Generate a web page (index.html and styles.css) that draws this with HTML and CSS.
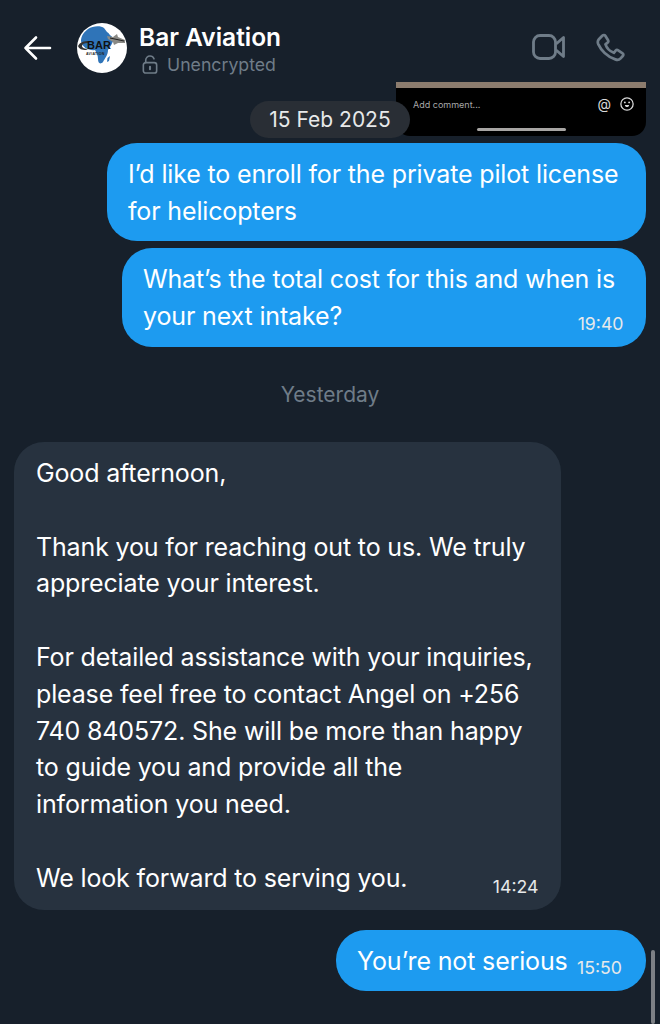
FILE: index.html
```html
<!DOCTYPE html>
<html lang="en">
<head>
    <meta charset="UTF-8">
    <meta name="viewport" content="width=device-width, initial-scale=1.0">
    <title>Bar Aviation</title>
    <link rel="stylesheet" href="styles.css">
</head>
<body>
    <header class="top-bar">
        <svg class="back" width="30" height="26" viewBox="0 0 30 26" fill="none" stroke="#fff" stroke-width="2.6" stroke-linecap="round" stroke-linejoin="round">
            <path d="M2.5 13H27M13 2.5L2.5 13L13 23.5"/>
        </svg>
        <svg class="avatar" width="50" height="50" viewBox="0 0 50 50">
            <circle cx="25" cy="25" r="25" fill="#fff"/>
            <path d="M11 6C16 2.500 24 2.500 27 5L30 9C32 10 33 13 37 15C36 20 33 24 31 27C31 32 28 35 26 39C23 42 21 40 21 36C21 32 19 29 18 27C13 28 5 25 4 18C4 13 7 9 11 6Z" fill="#2f74b8"/>
            <path d="M30.500 35L33 33L32 38L30 39Z" fill="#2f74b8"/>
            <path d="M30 13L36 14L40 11L41 14L48 17L48 20L41 20L37 22L36 19L31 16Z" fill="#8a8a86"/>
            <path d="M33 15L47 18" stroke="#222" stroke-width="1" fill="none"/>
            <path d="M1 23C3 19 7 18 12 18L11 20C7 20 5 21 5 23C5 25 8 26 11 26L9 27C5 27 2 26 1 23Z" fill="#333"/>
            <text class="logo-bar" x="10" y="26">BAR</text>
            <text class="logo-sub" x="9" y="31.500">AVIATION</text>
        </svg>
        <div class="title-wrap">
            <div class="name">Bar Aviation</div>
            <div class="status">
                <svg width="16" height="19" viewBox="0 0 16 20" fill="none" stroke="#6f7c88" stroke-width="1.7" stroke-linecap="round">
                    <rect x="1" y="8" width="14" height="11" rx="2.5"/>
                    <path d="M3.5 8V5.5C3.5 3 5.5 1 8 1C10 1 11.6 2.2 12.2 4"/>
                    <path d="M8 12.5V15" stroke-width="2.2"/>
                </svg>
                <span>Unencrypted</span>
            </div>
        </div>
        <div class="call-icons">
            <svg width="33" height="26" viewBox="0 0 33 26" fill="none" stroke="#6f7c88" stroke-width="2.8" stroke-linejoin="round">
                <rect x="1.500" y="1.500" width="22" height="23" rx="6.500"/>
                <path d="M24 10L31.500 3.500V22.500L24 16"/>
            </svg>
            <svg width="29" height="29" viewBox="0 0 30 30" fill="none" stroke="#6f7c88" stroke-width="2.800" stroke-linejoin="round">
                <path d="M3 6.500L6.500 2.800C7.500 1.800 9 1.800 9.600 2.800L12.500 7.500C13 8.500 12.800 9.400 12 10L9.800 11.800C11 15.500 14.500 19 18.500 20.500L20.300 18.300C21 17.500 22 17.300 23 18L27.500 21C28.500 21.700 28.500 23 27.700 23.800L25.200 26.500C24 27.800 22 28 20 27.300C11.500 24.500 5 17.500 2.300 11.500C1.500 9.500 1.800 7.800 3 6.500Z"/>
            </svg>
        </div>
    </header>

    <main class="chat">
        <div class="media-row">
            <div class="media">
                <div class="media-strip"></div>
                <div class="media-bar">
                    <span class="media-text">Add comment...</span>
                    <span class="media-icons">
                        <span class="media-at">@</span>
                        <svg width="14" height="14" viewBox="0 0 13 13" fill="none" stroke="#d8d8d8" stroke-width="1.200">
                            <circle cx="6.500" cy="6.500" r="5.700"/>
                            <circle cx="4.500" cy="5" r=".9" fill="#d8d8d8" stroke="none"/>
                            <circle cx="8.500" cy="5" r=".9" fill="#d8d8d8" stroke="none"/>
                            <path d="M4.500 7.500H8.500C8.300 10 4.700 10 4.500 7.500Z" fill="#d8d8d8" stroke="none"/>
                        </svg>
                    </span>
                </div>
                <div class="media-handle"></div>
            </div>
            <div class="date-pill">15 Feb 2025</div>
        </div>

        <div class="bubble sent first">I’d like to enroll for the private pilot license for helicopters</div>
        <div class="bubble sent second">What’s the total cost for this and when is your next intake?<span class="time">19:40</span></div>

        <div class="day">Yesterday</div>

        <div class="bubble received">
            <p>Good afternoon,</p>
            <p>Thank you for reaching out to us. We truly appreciate your interest.</p>
            <p>For detailed assistance with your inquiries, please feel free to contact Angel on +256 740 840572. She will be more than happy to guide you and provide all the information you need.</p>
            <p>We look forward to serving you.</p>
            <span class="time">14:24</span>
        </div>

        <div class="bubble sent last">You’re not serious<span class="time">15:50</span></div>
    </main>
    <div class="scroll-thumb"></div>
</body>
</html>
```

FILE: styles.css
```css
* {
    box-sizing: border-box;
}
html, body {
    height: 1024px;
}
body {
    margin: 0;
    background-color: #17202b;
    color: #fff;
    font-family: Inter, "Liberation Sans", sans-serif;
    overflow: hidden;
    position: relative;
}
.top-bar {
    display: flex;
    align-items: center;
    height: 82px;
    padding: 14px 35px 0 23px;
}
.back {
    margin-right: 24px;
}
.avatar {
    margin-right: 12px;
}
.logo-bar {
    font-family: "Liberation Sans", sans-serif;
    font-size: 11px;
    font-weight: 700;
    fill: #111;
}
.logo-sub {
    font-family: "Liberation Sans", sans-serif;
    font-size: 3.500px;
    font-weight: 700;
    letter-spacing: .3px;
    fill: #222;
}
.title-wrap {
    flex: 1;
    padding-top: 3px;
}
.name {
    font-size: 24.500px;
    font-weight: 600;
    line-height: 30px;
    margin-top: -1px;
}
.status {
    display: flex;
    align-items: center;
    gap: 9px;
    margin-top: 1px;
    padding-left: 3px;
    color: #6f7c88;
    font-size: 17.700px;
    line-height: 24px;
}
.call-icons {
    display: flex;
    align-items: center;
    gap: 31px;
    margin-bottom: 2px;
}
.chat {
    display: flex;
    flex-direction: column;
    padding: 0 14px;
}
.media-row {
    position: relative;
    display: flex;
    justify-content: flex-end;
    height: 61px;
}
.media {
    width: 250px;
    height: 54px;
    background-color: #000;
    border-radius: 0 0 14px 14px;
    position: relative;
    overflow: hidden;
}
.media-strip {
    height: 6px;
    background-color: #8c7c6e;
}
.media-bar {
    display: flex;
    justify-content: space-between;
    align-items: center;
    padding: 8px 12px 0 17px;
}
.media-text {
    font-size: 9px;
    color: #a8a8a8;
}
.media-icons {
    display: flex;
    align-items: center;
    gap: 9px;
}
.media-at {
    font-size: 14px;
    line-height: 16px;
    color: #d8d8d8;
}
.media-handle {
    position: absolute;
    left: 81px;
    bottom: 5px;
    width: 89px;
    height: 3px;
    border-radius: 2px;
    background-color: #a8a6a4;
}
.date-pill {
    position: absolute;
    left: 236px;
    top: 19px;
    width: 160px;
    height: 37px;
    border-radius: 19px;
    background-color: #292e35;
    font-size: 21px;
    line-height: 37px;
    text-align: center;
    color: #e7e9ea;
}
.bubble {
    font-size: 25px;
    line-height: 36.800px;
    letter-spacing: -.15px;
}
.bubble p {
    margin: 0 0 36.800px;
}
.bubble p:last-of-type {
    margin-bottom: 0;
}
.sent {
    align-self: flex-end;
    background-color: #1d9bf0;
    border-radius: 30px;
    padding: 13px 21px 11.400px;
}
.first {
    width: 539px;
}
.second {
    width: 524px;
    margin-top: 7px;
    padding-bottom: 12.400px;
    position: relative;
}
.received {
    width: 547px;
    margin-top: 32px;
    padding: 13px 22px;
    background-color: #27323f;
    border-radius: 30px;
    position: relative;
}
.time {
    position: absolute;
    right: 22.500px;
    bottom: 11px;
    font-size: 17.700px;
    line-height: 24px;
    letter-spacing: 0;
    color: #e7e9ea;
}
.day {
    margin-top: 33px;
    text-align: center;
    color: #6f7c88;
    font-size: 21px;
    line-height: 30px;
}
.last {
    width: 310px;
    height: 61px;
    margin-top: 20px;
    padding-top: 13px;
    position: relative;
}
.last .time {
    right: 24px;
}
.scroll-thumb {
    position: absolute;
    right: 5px;
    top: 950px;
    width: 4px;
    height: 74px;
    border-radius: 2px;
    background-color: #7d8085;
}
```
